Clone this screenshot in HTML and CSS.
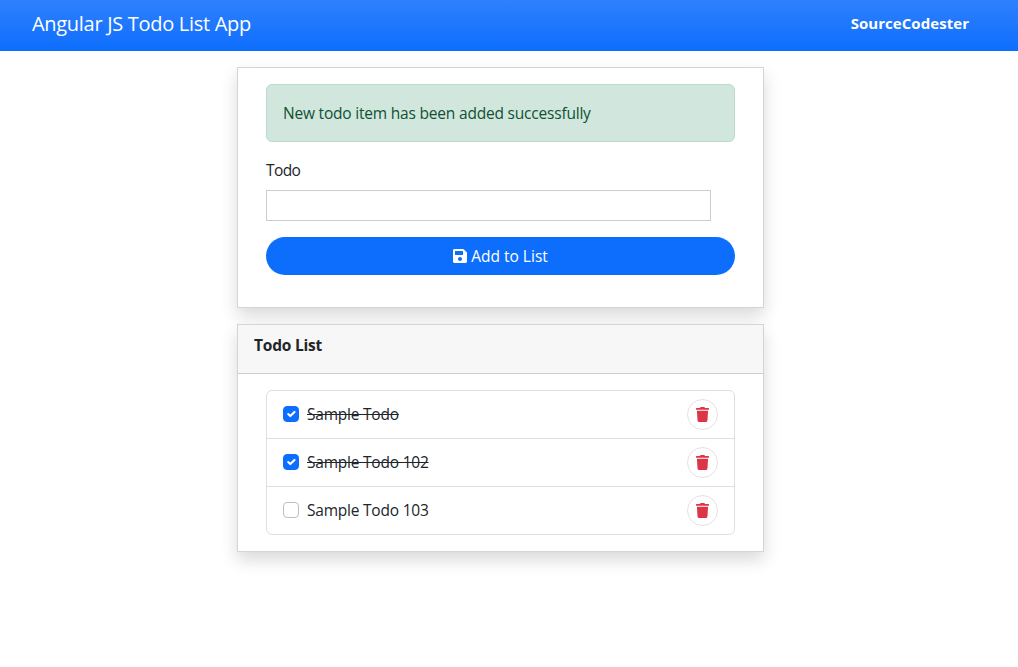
FILE: index.html
```html
<!DOCTYPE html>
<html lang="en">
<head>
<meta charset="utf-8">
<title>Angular JS Todo List App</title>
<link rel="stylesheet" href="styles.css">
</head>
<body>
<nav class="navbar">
  <span class="brand">Angular JS Todo List App</span>
  <span class="site">SourceCodester</span>
</nav>
<main class="main">
  <section class="card form-card">
    <div class="alert">New todo item has been added successfully</div>
    <label class="label" for="todo">Todo</label>
    <input class="input" id="todo" type="text">
    <button class="add-btn" type="button">
      <svg class="save-icon" viewBox="0 0 448 512" aria-hidden="true"><path fill="currentColor" d="M433.900 129.900l-83.900-83.900A48 48 0 0 0 316.100 32H48C21.500 32 0 53.500 0 80v352c0 26.500 21.500 48 48 48h352c26.500 0 48-21.500 48-48V163.900a48 48 0 0 0-14.100-34zM224 416c-35.300 0-64-28.700-64-64 0-35.300 28.700-64 64-64s64 28.700 64 64c0 35.300-28.700 64-64 64zm96-304.500V212c0 6.600-5.400 12-12 12H76c-6.600 0-12-5.400-12-12V108c0-6.600 5.400-12 12-12h228.500c3.200 0 6.200 1.300 8.500 3.500l3.500 3.500c2.200 2.300 3.500 5.300 3.500 8.500z"/></svg>
      <span>Add to List</span>
    </button>
  </section>
  <section class="card list-card">
    <header class="card-header">Todo List</header>
    <div class="list-body">
      <ul class="list">
        <li class="item">
          <span class="check checked"><svg viewBox="0 0 20 20" aria-hidden="true"><path d="M6 10l3 3 6-6" fill="none" stroke="#fff" stroke-width="3" stroke-linecap="round" stroke-linejoin="round"/></svg></span>
          <span class="text done">Sample Todo</span>
          <button class="del" type="button" aria-label="Delete"><svg viewBox="0 0 448 512" aria-hidden="true"><path fill="currentColor" d="M432 32H312l-9.400-18.700A24 24 0 0 0 281.100 0H166.800a23.700 23.700 0 0 0-21.400 13.300L136 32H16A16 16 0 0 0 0 48v32a16 16 0 0 0 16 16h416a16 16 0 0 0 16-16V48a16 16 0 0 0-16-16zM53.200 467a48 48 0 0 0 47.900 45h245.800a48 48 0 0 0 47.900-45L416 128H32z"/></svg></button>
        </li>
        <li class="item">
          <span class="check checked"><svg viewBox="0 0 20 20" aria-hidden="true"><path d="M6 10l3 3 6-6" fill="none" stroke="#fff" stroke-width="3" stroke-linecap="round" stroke-linejoin="round"/></svg></span>
          <span class="text done">Sample Todo 102</span>
          <button class="del" type="button" aria-label="Delete"><svg viewBox="0 0 448 512" aria-hidden="true"><path fill="currentColor" d="M432 32H312l-9.400-18.700A24 24 0 0 0 281.100 0H166.800a23.700 23.700 0 0 0-21.400 13.300L136 32H16A16 16 0 0 0 0 48v32a16 16 0 0 0 16 16h416a16 16 0 0 0 16-16V48a16 16 0 0 0-16-16zM53.200 467a48 48 0 0 0 47.900 45h245.800a48 48 0 0 0 47.900-45L416 128H32z"/></svg></button>
        </li>
        <li class="item">
          <span class="check"></span>
          <span class="text">Sample Todo 103</span>
          <button class="del" type="button" aria-label="Delete"><svg viewBox="0 0 448 512" aria-hidden="true"><path fill="currentColor" d="M432 32H312l-9.400-18.700A24 24 0 0 0 281.100 0H166.800a23.700 23.700 0 0 0-21.400 13.300L136 32H16A16 16 0 0 0 0 48v32a16 16 0 0 0 16 16h416a16 16 0 0 0 16-16V48a16 16 0 0 0-16-16zM53.200 467a48 48 0 0 0 47.900 45h245.800a48 48 0 0 0 47.900-45L416 128H32z"/></svg></button>
        </li>
      </ul>
    </div>
  </section>
</main>
</body>
</html>
```
FILE: styles.css
```css
* { box-sizing: border-box; }
html, body { margin: 0; padding: 0; }
body {
  min-height: 100vh;
  background: #fff;
  color: #212529;
  font-family: "Open Sans", "Noto Sans", sans-serif;
  font-size: 15.5px;
  letter-spacing: -0.2px;
  line-height: 24px;
}
.navbar {
  height: 51px;
  display: flex;
  align-items: center;
  justify-content: space-between;
  padding: 0 49px 3px 32px;
  color: #fff;
  background: linear-gradient(180deg, #2f80fd 0%, #0d6efd 100%);
}
.brand { font-size: 20px; letter-spacing: -0.3px; }
.site { font-size: 15px; font-weight: 700; letter-spacing: 0.05px; margin-bottom: 2px; }
.main {
  width: 527px;
  margin: 16px 0 0 237px;
  display: flex;
  flex-direction: column;
  gap: 16px;
}
.card {
  background: #fff;
  border: 1px solid rgba(0, 0, 0, .17);
  box-shadow: 0 8px 16px rgba(0, 0, 0, .15);
}
.form-card {
  height: 241px;
  padding: 16px 28px;
  display: flex;
  flex-direction: column;
  align-items: flex-start;
}
.alert {
  width: 469px;
  height: 58px;
  padding: 16px;
  color: #0f5132;
  background: #d1e7dd;
  border: 1px solid #badbcc;
  border-radius: 6px;
  margin-bottom: 16px;
}
.label { height: 24px; margin-bottom: 8px; letter-spacing: -0.6px; }
.input {
  display: block;
  width: 445px;
  height: 31px;
  border: 1px solid #ccc;
  background: #fff;
  margin-bottom: 16px;
}
.add-btn {
  width: 469px;
  height: 38px;
  display: flex;
  align-items: center;
  justify-content: center;
  gap: 4px;
  border: 0;
  border-radius: 19px;
  background: #0d6efd;
  color: #fff;
  font: inherit;
  font-size: 15.5px;
}
.save-icon { width: 14px; height: 16px; }
.card-header {
  height: 49px;
  padding: 8px 16px;
  background: #f7f7f7;
  border-bottom: 1px solid rgba(0, 0, 0, .17);
  font-weight: 700;
  color: #212529;
}
.list-card { height: 228px; }
.list-body { padding: 16px 28px; }
.list {
  list-style: none;
  margin: 0;
  padding: 0;
  border: 1px solid #dfdfdf;
  border-radius: 6px;
}
.item {
  height: 48px;
  display: flex;
  align-items: center;
  gap: 8px;
  padding: 0 16px;
  border-bottom: 1px solid #dfdfdf;
}
.item:last-child { border-bottom: 0; height: 47px; }
.check {
  flex: none;
  width: 16px;
  height: 16px;
  margin-bottom: 2px;
  border: 1px solid #bfbfbf;
  border-radius: 4px;
  background: #fff;
}
.check.checked { background: #0d6efd; border-color: #0d6efd; }
.check svg { display: block; width: 14px; height: 14px; }
.text { flex: 1; margin-bottom: 2px; letter-spacing: -0.22px; }
.text.done { text-decoration: line-through; }
.del {
  flex: none;
  width: 31px;
  height: 31px;
  display: flex;
  align-items: center;
  justify-content: center;
  padding: 0;
  border: 1px solid #e6dfe2;
  border-radius: 50%;
  background: #fff;
  color: #dc3545;
}
.del svg { width: 13px; height: 15px; }
```
